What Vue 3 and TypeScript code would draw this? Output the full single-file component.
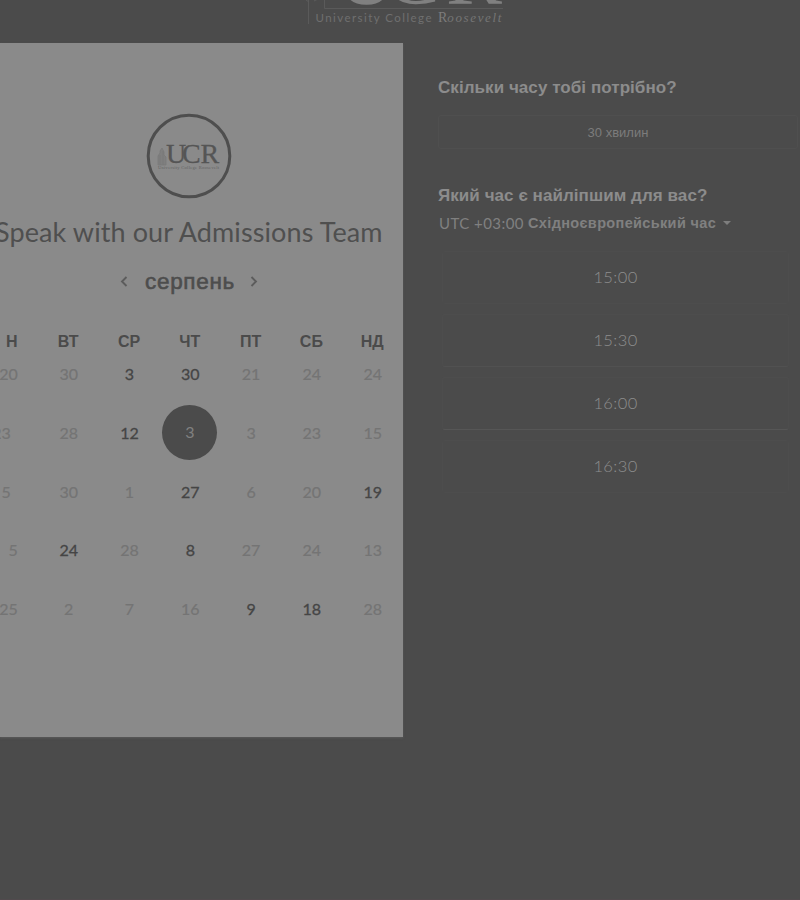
<script setup lang="ts">
interface Day {
  value: number
  open?: boolean
  selected?: boolean
}

const weekdays: string[] = ['Н', 'ВТ', 'СР', 'ЧТ', 'ПТ', 'СБ', 'НД']
const off = (value: number): Day => ({ value })
const on = (value: number): Day => ({ value, open: true })

const weeks: Day[][] = [
  [off(20), off(30), on(3), on(30), off(21), off(24), off(24)],
  [off(23), off(28), on(12), { value: 3, selected: true }, off(3), off(23), off(15)],
  [off(5), off(30), off(1), on(27), off(6), off(20), on(19)],
  [off(5), on(24), off(28), on(8), off(27), off(24), off(13)],
  [off(25), off(2), off(7), off(16), on(9), on(18), off(28)],
]
const slots: string[] = ['15:00', '15:30', '16:00', '16:30']
</script>

<template>
  <div class="page">
    <header class="brand">
      <svg class="brand-logo" width="204" height="32" viewBox="304 0 204 32">
        <path d="M308.5 0V24M324.5 0V8.5H503" fill="none" stroke="#5a5a5a" />
        <path d="M306 0l3 2M314 1l4-2" fill="none" stroke="#5c5c5c" />
        <text class="brand-big" x="336 384 446" y="4">UCR</text>
        <text class="brand-name" x="315.500" y="22" textLength="116" lengthAdjust="spacing">University College</text>
        <text class="brand-r" x="438" y="22">R<tspan class="brand-script" textLength="54" lengthAdjust="spacing">oosevelt</tspan></text>
      </svg>
    </header>
    <main class="booking">
      <section class="card">
        <svg class="badge" width="86" height="86" viewBox="0 0 86 86">
          <circle cx="43" cy="43" r="40.800" fill="none" stroke="#4e4e4e" stroke-width="3" />
          <path d="M12 52V43l2-3v-2l2-3 2 4v3l2 2v8zM14 42v10M17 38v14" fill="#7f7f7f" stroke="#797979" stroke-width=".8" />
          <text class="badge-big" x="20 36 54.500" y="50">UCR</text>
          <text class="badge-small" x="12" y="56" textLength="61" lengthAdjust="spacing">University College Roosevelt</text>
        </svg>
        <h1 class="title">Speak with our Admissions Team</h1>
        <div class="month">
          <svg width="8" height="12" viewBox="0 0 8 12"><path d="M6.500 1L2 5.500 6.500 10" /></svg>
          <span>серпень</span>
          <svg width="8" height="12" viewBox="0 0 8 12"><path d="M1.500 1L6 5.500 1.500 10" /></svg>
        </div>
        <div class="calendar weekdays">
          <span v-for="name in weekdays" :key="name">{{ name }}</span>
        </div>
        <div v-for="(week, w) in weeks" :key="w" class="calendar week">
          <span v-for="(day, d) in week" :key="d" class="day" :class="{ open: day.open, selected: day.selected, edge: d === 0, tucked: d === 0 && (w === 1 || w === 2) }">{{ day.value }}</span>
        </div>
      </section>
      <section class="options">
        <h2>Скільки часу тобі потрібно?</h2>
        <button class="duration">30 хвилин</button>
        <h2>Який час є найліпшим для вас?</h2>
        <div class="zone">
          <span class="utc">UTC +03:00</span>
          <b>Східноєвропейський час</b>
          <svg width="8" height="4" viewBox="0 0 8 4"><path d="M0 0h8L4 4z" fill="#7e7e7e" /></svg>
        </div>
        <div class="slots">
          <button v-for="slot in slots" :key="slot" class="slot">{{ slot }}</button>
        </div>
      </section>
    </main>
  </div>
</template>

<style>
body { margin: 0; background: #4b4b4b; }
</style>

<style scoped>
.page {
  box-sizing: border-box;
  width: 800px;
  height: 900px;
  overflow: hidden;
  background: #4b4b4b;
  border-bottom: 1px solid #514a4d;
  font-family: Lato, "Liberation Sans", sans-serif;
}
.brand { height: 43px; display: flex; padding-left: 304px; }
.brand-big { font: 84px "Liberation Serif", serif; fill: #808080; }
.brand-name { font: 11.500px Lato, sans-serif; fill: #6f6f6f; }
.brand-r { font: 14px "Liberation Serif", serif; fill: #7c7c7c; }
.brand-script { font: italic 13px "Liberation Serif", serif; fill: #757575; }
.booking { display: flex; height: 694px; }
.card {
  box-sizing: border-box;
  width: 403px;
  flex: none;
  padding-top: 70px;
  overflow: hidden;
  background: #8a8a8a;
  box-shadow: 0 1px 2px #5a5a5a;
}
.badge { display: block; margin-left: 146px; }
.badge-big { font: 28px "Liberation Serif", serif; fill: #555; stroke: #555; stroke-width: .3px; }
.badge-small { font: 4.500px "Liberation Serif", serif; fill: #626262; }
.title {
  margin: 16px 0 0 -5px;
  font-size: 27px;
  line-height: 34px;
  font-weight: 400;
  letter-spacing: .1px;
  white-space: nowrap;
  color: #4f4f4f;
}
.month {
  display: flex;
  align-items: center;
  justify-content: center;
  gap: 17px;
  height: 30px;
  margin: 18px 0 0 -25px;
  font: 22.500px "Liberation Sans", sans-serif;
  color: #4d4d4d;
}
.month span { letter-spacing: .7px; margin-right: -2px; -webkit-text-stroke: .6px #4d4d4d; }
.month path { fill: none; stroke: #5c5c5c; stroke-width: 1.900; }
.calendar { display: grid; grid-template-columns: repeat(7, 60.800px); margin-left: -23px; }
.weekdays {
  margin-top: 34px;
  height: 20px;
  line-height: 21px;
  text-align: center;
  font-family: "Liberation Sans", sans-serif;
  font-size: 16px;
  font-weight: 700;
  color: #4b4b4b;
}
.weekdays span:first-child { padding-left: 9px; }
.week { height: 58.700px; align-items: center; justify-items: center; }
.weekdays + .week { margin-top: -6px; }
.day { padding-left: 1px; font-size: 16px; line-height: 20px; color: #747474; -webkit-text-stroke: .2px #747474; }
.open { color: #454545; -webkit-text-stroke: .3px #454545; }
.edge { justify-self: end; padding-right: 20px; }
.tucked { padding-right: 27px; }
.selected {
  width: 55px;
  height: 55px;
  margin-top: -2px;
  padding: 0;
  border-radius: 50%;
  background: #4b4b4b;
  color: #808080;
  -webkit-text-stroke: 0;
  line-height: 53px;
  text-align: center;
}
.options { width: 362px; padding: 34px 0 0 35px; }
h2 {
  margin: 0;
  height: 22px;
  font: 700 17px/22px "Liberation Sans", sans-serif;
  letter-spacing: .06px;
  white-space: nowrap;
  color: #8c8c8c;
}
button { display: block; box-sizing: border-box; background: transparent; }
.duration {
  width: 360px;
  height: 34px;
  margin: 16px 0 36px;
  padding: 0;
  border: 1px solid #4f4f4f;
  border-radius: 3px;
  font: 13px "Liberation Sans", sans-serif;
  color: #7c7c7c;
}
.zone {
  display: flex;
  align-items: center;
  gap: 5px;
  height: 20px;
  margin: 6px 0 0 1px;
  white-space: nowrap;
  color: #808080;
}
.utc { font-size: 15px; letter-spacing: .45px; }
.zone b { font: 700 14.500px "Liberation Sans", sans-serif; letter-spacing: .35px; margin-left: -1px; }
.zone svg { margin-left: 2px; }
.slots { display: grid; row-gap: 10px; margin: 18px 0 0 4px; }
.slot {
  width: 347px;
  height: 53px;
  padding: 0 0 2px;
  border: 1px solid #4d4d4d;
  border-radius: 3px;
  font: 300 16.500px Lato, sans-serif;
  letter-spacing: .4px;
  color: #8e8e8e;
}
.slot:nth-child(2) { border-bottom-color: #515151; }
.slot:nth-child(3) { border-bottom-color: #565656; }
</style>
